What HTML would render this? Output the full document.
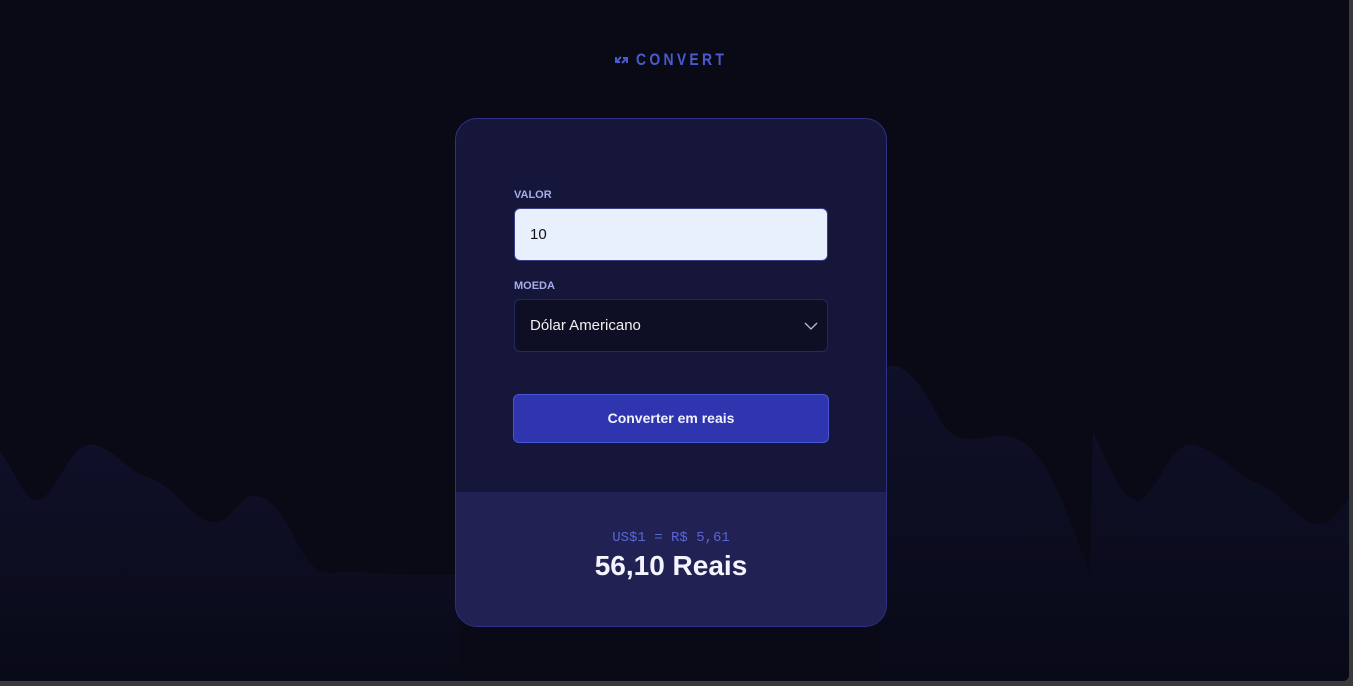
<!DOCTYPE html>
<html><head><meta charset="utf-8"><style>
*{box-sizing:border-box;margin:0;padding:0}
body{width:1353px;height:686px;overflow:hidden;background:#3a3a3c;font-family:"Liberation Sans",sans-serif;position:relative}
.page{position:absolute;left:0;top:0;width:1349px;height:681px;background:#090a15;border-bottom-right-radius:6px;overflow:hidden}
svg.bg{position:absolute;left:0;top:0}
.logo{position:absolute;left:614px;top:51px;height:18px}
.logo span{position:absolute;left:22px;top:0;color:#4a5bd1;font-family:"Liberation Sans",sans-serif;font-weight:bold;font-size:17px;letter-spacing:4px;transform:scaleX(0.82);transform-origin:left;white-space:nowrap;line-height:18px}
.card{position:absolute;left:455px;top:118px;width:432px;height:509px;border:1px solid #2f3188;border-radius:22px;background:#15163a;overflow:hidden}
.bottom{position:absolute;left:0;top:373px;width:100%;height:136px;background:#212253;text-align:center}
.lbl{position:absolute;left:58px;font-size:11px;font-weight:bold;color:#a3aee8}
.inp{position:absolute;left:58px;width:314px;height:53px;border-radius:6px;font-size:15px;padding-left:15px;line-height:51px}
.btn{position:absolute;left:57px;top:275px;width:316px;height:49px;background:#2f35ae;border:1px solid #4a55d6;border-radius:6px;color:#f2f2ff;font-weight:bold;font-size:14px;text-align:center;line-height:47px}
</style></head><body>
<div class="page">
<svg class="bg" width="1349" height="681">
<defs><linearGradient id="g" x1="0" y1="0" x2="0" y2="1"><stop offset="0" stop-color="#0f1029"/><stop offset="1" stop-color="#090a17"/></linearGradient></defs>
<path fill="url(#g)" d="M0,452 C15,470 25,505 40,500 C60,490 70,440 95,445 C115,450 125,470 150,478 C180,490 195,525 215,522 C235,520 240,490 260,497 C290,505 300,575 330,573 C360,570 380,575 420,575 L460,575 L460,681 L0,681Z"/>
<path fill="url(#g)" d="M880,370 C900,355 920,380 940,420 C955,445 975,440 995,436 C1030,430 1050,470 1070,520 L1090,575 L1093,432 C1110,470 1125,505 1140,500 C1160,490 1170,440 1195,445 C1215,450 1230,470 1260,485 C1290,500 1300,525 1320,524 C1335,523 1340,505 1349,500 L1349,681 L880,681Z"/>
</svg>
<div class="logo"><svg style="position:absolute;left:0;top:2px" width="15" height="14" viewBox="0 0 15 14" fill="none" stroke="#4a5bd1" stroke-width="2"><path d="M2 9 L7 4 M2 4 V9 H6"/><path d="M13 5 L8 10 M13 10 V5 H9"/></svg><span>CONVERT</span></div>
<div class="card">
<div class="lbl" style="top:70px">VALOR</div>
<div class="inp" style="top:89px;background:#e8effd;border:1px solid #3a3f8a;color:#111">10</div>
<div class="lbl" style="top:161px">MOEDA</div>
<div class="inp" style="top:180px;background:#0e0f24;border:1px solid #25285e;color:#f0f0f0">Dólar Americano
<svg style="position:absolute;right:9px;top:22px" width="14" height="9" viewBox="0 0 14 9" fill="none" stroke="#b9bdd6" stroke-width="1.3"><path d="M1 1 L7 7 L13 1"/></svg></div>
<div class="btn">Converter em reais</div>
<div class="bottom">
<div style="position:absolute;top:38px;width:100%;font-family:'Liberation Mono',monospace;font-size:14px;color:#5865d4">US$1 = R$ 5,61</div>
<div style="position:absolute;top:58px;width:100%;font-size:28px;font-weight:bold;color:#f4f4ff">56,10 Reais</div>
</div>
</div>
</div>
</body></html>
